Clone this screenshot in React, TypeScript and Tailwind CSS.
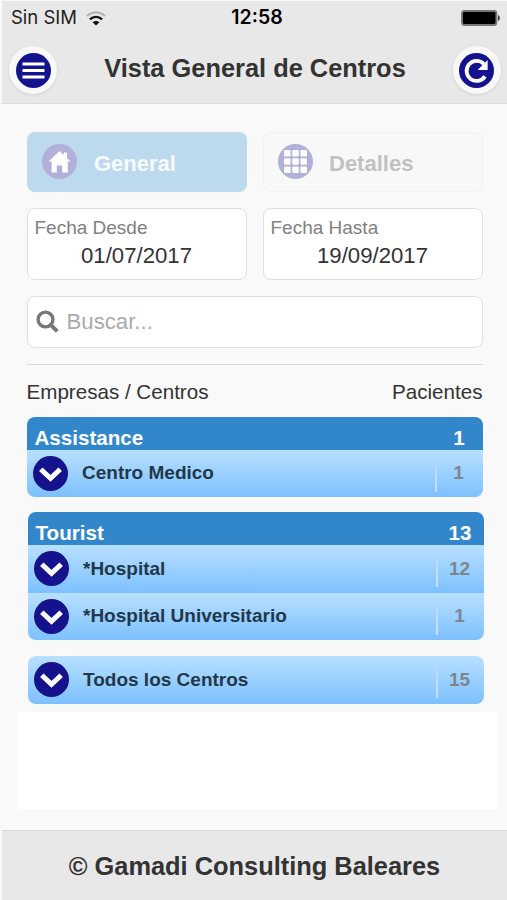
import React from 'react';

interface Center {
  name: string;
  patients: number;
}

interface CenterRowProps {
  center: Center;
}

const ChevronBadge: React.FC = () => (
  <svg className="w-[35px] h-[35px] shrink-0" viewBox="0 0 35 35">
    <circle cx="17.5" cy="17.5" r="17.5" fill="#14128d" />
    <path d="M7.8 13.2 L17.5 22.4 L27.2 13.2" fill="none" stroke="#fff" strokeWidth="5" />
  </svg>
);

const CenterRow: React.FC<CenterRowProps> = ({ center }) => (
  <div className="h-[47.5px] flex items-center pl-1.5 bg-linear-to-b from-[#b8e0ff] to-[#7cc0ff]">
    <ChevronBadge />
    <span className="ml-[14.5px] flex-1 text-[19px] font-bold text-[#22384a]">{center.name}</span>
    <span className="w-[2px] h-[31px] mt-1.5 bg-linear-to-b from-[#b4d9f5] to-[#c9dff2]" />
    <span className="w-[46px] pr-0.5 text-center text-[19px] font-bold text-[#7b8790]">{center.patients}</span>
  </div>
);

const GroupHeader: React.FC<CenterRowProps> = ({ center }) => (
  <div className="h-[33px] flex justify-between pl-2 bg-[#3287ca] text-white text-[20.6px] leading-[42px] font-bold">
    <span>{center.name}</span>
    <span className="w-[47px] text-center">{center.patients}</span>
  </div>
);

const App: React.FC = () => {
  return (
    <div className="w-[507px] h-[900px] flex flex-col overflow-hidden bg-[#f9f9f9] font-['Liberation_Sans',Arial,sans-serif] text-[#333] whitespace-nowrap">
      {/* Status bar and title */}
      <header className="ml-0.5 mt-px h-[103px] shrink-0 bg-[#e8e8e8] border-b border-[#dcdcdc]">
        <div className="h-[34px] grid grid-cols-3 items-center pl-[9px] pr-[7px] text-black">
          <div className="flex items-center gap-[9px]">
            <span className="font-['Inter',sans-serif] text-[18.5px] text-[#222]">Sin SIM</span>
            <svg className="w-[20px] h-[15px]" viewBox="0 0 20 15">
              <path d="M1 5.2 C6 0.2 14 0.2 19 5.2" fill="none" stroke="#aaa" strokeWidth="1.8" />
              <path d="M4 8.4 C7.4 5 12.6 5 16 8.4" fill="none" stroke="#111" strokeWidth="2.4" />
              <path d="M6.6 11.3 C8.6 9.4 11.4 9.4 13.4 11.3 L10 14.6 Z" fill="#111" />
            </svg>
          </div>
          <span className="pl-[3px] text-center font-['Inter',sans-serif] text-[19.5px] font-semibold">12:58</span>
          <svg className="justify-self-end w-[39px] h-[16px]" viewBox="0 0 39 16">
            <rect x="0.7" y="0.7" width="35" height="14.6" rx="2.5" fill="#777" stroke="#777" strokeWidth="1.2" />
            <rect x="2" y="2" width="32.4" height="12" rx="1.3" fill="#000" />
            <path d="M37 5 C39.3 5.5 39.3 10.5 37 11 Z" fill="#333" />
          </svg>
        </div>
        <div className="h-[69px] pt-px flex items-center justify-between pl-[7px] pr-1.5">
          <button className="w-12 h-12 rounded-full bg-[#f8f8f8] shadow-[0_1px_3px_rgba(0,0,0,0.1)] flex items-center justify-center">
            <svg className="w-[35px] h-[35px]" viewBox="0 0 35 35">
              <circle cx="17.5" cy="17.5" r="17.5" fill="#14128d" />
              <path d="M6.5 11 H28.5 M6.5 17.5 H28.5 M6.5 24 H28.5" stroke="#fff" strokeWidth="3" />
            </svg>
          </button>
          <h1 className="text-[25.4px] leading-[30px] font-bold mb-1">Vista General de Centros</h1>
          <button className="w-12 h-12 rounded-full bg-[#f8f8f8] shadow-[0_1px_3px_rgba(0,0,0,0.1)] flex items-center justify-center">
            <svg className="w-[35px] h-[35px]" viewBox="0 0 35 35">
              <circle cx="17.5" cy="17.5" r="17.5" fill="#14128d" />
              <path d="M26 23.4 A10 10 0 1 1 24.8 11" fill="none" stroke="#fff" strokeWidth="3.8" />
              <path d="M28.6 7 V17 H18.6 Z" fill="#fff" />
            </svg>
          </button>
        </div>
      </header>

      <main className="flex-1 pt-[27.5px] px-[26.5px]">
        {/* Tabs */}
        <div className="grid grid-cols-[220px_220px] gap-4">
          <button className="h-[60px] flex items-center pl-[15.5px] rounded-lg bg-[#bdd9ee]">
            <svg className="w-[35px] h-[35px]" viewBox="0 0 35 35">
              <circle cx="17.5" cy="17.5" r="17.5" fill="#b1b0d9" />
              <path d="M17.5 7 L6.5 17.5 H9.6 V28.4 H14.8 V21.5 H20.2 V28.4 H25.8 V17.5 H28.5 L25 14 V8.5 H21.8 V11 Z" fill="#fff" />
            </svg>
            <span className="ml-[17px] mt-[3px] text-[22px] font-bold text-[#f5fbff]">General</span>
          </button>
          <button className="h-[60px] flex items-center pl-[14.5px] rounded-lg border border-[#f2f2f2] bg-[#f8f8f8]">
            <svg className="w-[35px] h-[35px]" viewBox="0 0 35 35">
              <circle cx="17.5" cy="17.5" r="17.5" fill="#b1b0d9" />
              {[6, 14.2, 22.4].map((y) =>
                [6, 14.2, 22.4].map((x) => (
                  <rect key={`${x}-${y}`} x={x} y={y} width="6.6" height="6.6" rx="1.2" fill="#fff" />
                ))
              )}
            </svg>
            <span className="ml-4 mt-[3px] text-[22px] font-bold text-[#c1c1c1]">Detalles</span>
          </button>
        </div>

        {/* Date range */}
        <div className="mt-4 grid grid-cols-[220px_220px] gap-4">
          <div className="h-[72px] pt-[8px] rounded-lg border-[1.5px] border-[#dfdfdf] bg-white">
            <div className="pl-[7px] text-[19px] leading-[22px] text-[#808080]">Fecha Desde</div>
            <div className="mt-[3px] text-center text-[22.2px] leading-[28px]">01/07/2017</div>
          </div>
          <div className="h-[72px] pt-[8px] rounded-lg border-[1.5px] border-[#dfdfdf] bg-white">
            <div className="pl-[7px] text-[19px] leading-[22px] text-[#808080]">Fecha Hasta</div>
            <div className="mt-[3px] text-center text-[22.2px] leading-[28px]">19/09/2017</div>
          </div>
        </div>

        {/* Search */}
        <div className="mt-4 w-[456px] h-[52px] flex items-center pl-2 rounded-lg border-[1.5px] border-[#dfdfdf] bg-white">
          <svg className="w-[23px] h-[23px]" viewBox="0 0 23 23">
            <circle cx="9.5" cy="9.5" r="7.4" fill="none" stroke="#777" strokeWidth="3.4" />
            <path d="M14.8 14.8 L21.3 21.3" stroke="#777" strokeWidth="4" />
          </svg>
          <span className="ml-2 text-[22.2px] leading-[26px] text-[#aaa]">Buscar...</span>
        </div>

        <div className="mt-4 w-[456px] h-[1.5px] bg-[#dadada]" />

        <div className="mt-[14px] w-[456px] h-[37.5px] flex justify-between text-[20.6px] leading-[26px]">
          <span>Empresas / Centros</span>
          <span>Pacientes</span>
        </div>

        {/* Companies with their centers */}
        <section className="w-[456px] rounded-lg overflow-hidden">
          <GroupHeader center={{ name: 'Assistance', patients: 1 }} />
          <CenterRow center={{ name: 'Centro Medico', patients: 1 }} />
        </section>
        <section className="mt-[15px] ml-px w-[456px] rounded-lg overflow-hidden">
          <GroupHeader center={{ name: 'Tourist', patients: 13 }} />
          <CenterRow center={{ name: '*Hospital', patients: 12 }} />
          <CenterRow center={{ name: '*Hospital Universitario', patients: 1 }} />
        </section>
        <section className="mt-4 ml-px w-[456px] rounded-lg overflow-hidden">
          <CenterRow center={{ name: 'Todos los Centros', patients: 15 }} />
        </section>

        <div className="mt-2 -ml-[8.5px] w-[479px] h-[97px] bg-white" />
      </main>

      <footer className="ml-0.5 h-[70px] shrink-0 flex items-center justify-center border-t border-[#d8d8d8] bg-[#e8e8e8]">
        <span className="mt-0.5 text-[25.4px] font-bold">© Gamadi Consulting Baleares</span>
      </footer>
    </div>
  );
};

export default App;
